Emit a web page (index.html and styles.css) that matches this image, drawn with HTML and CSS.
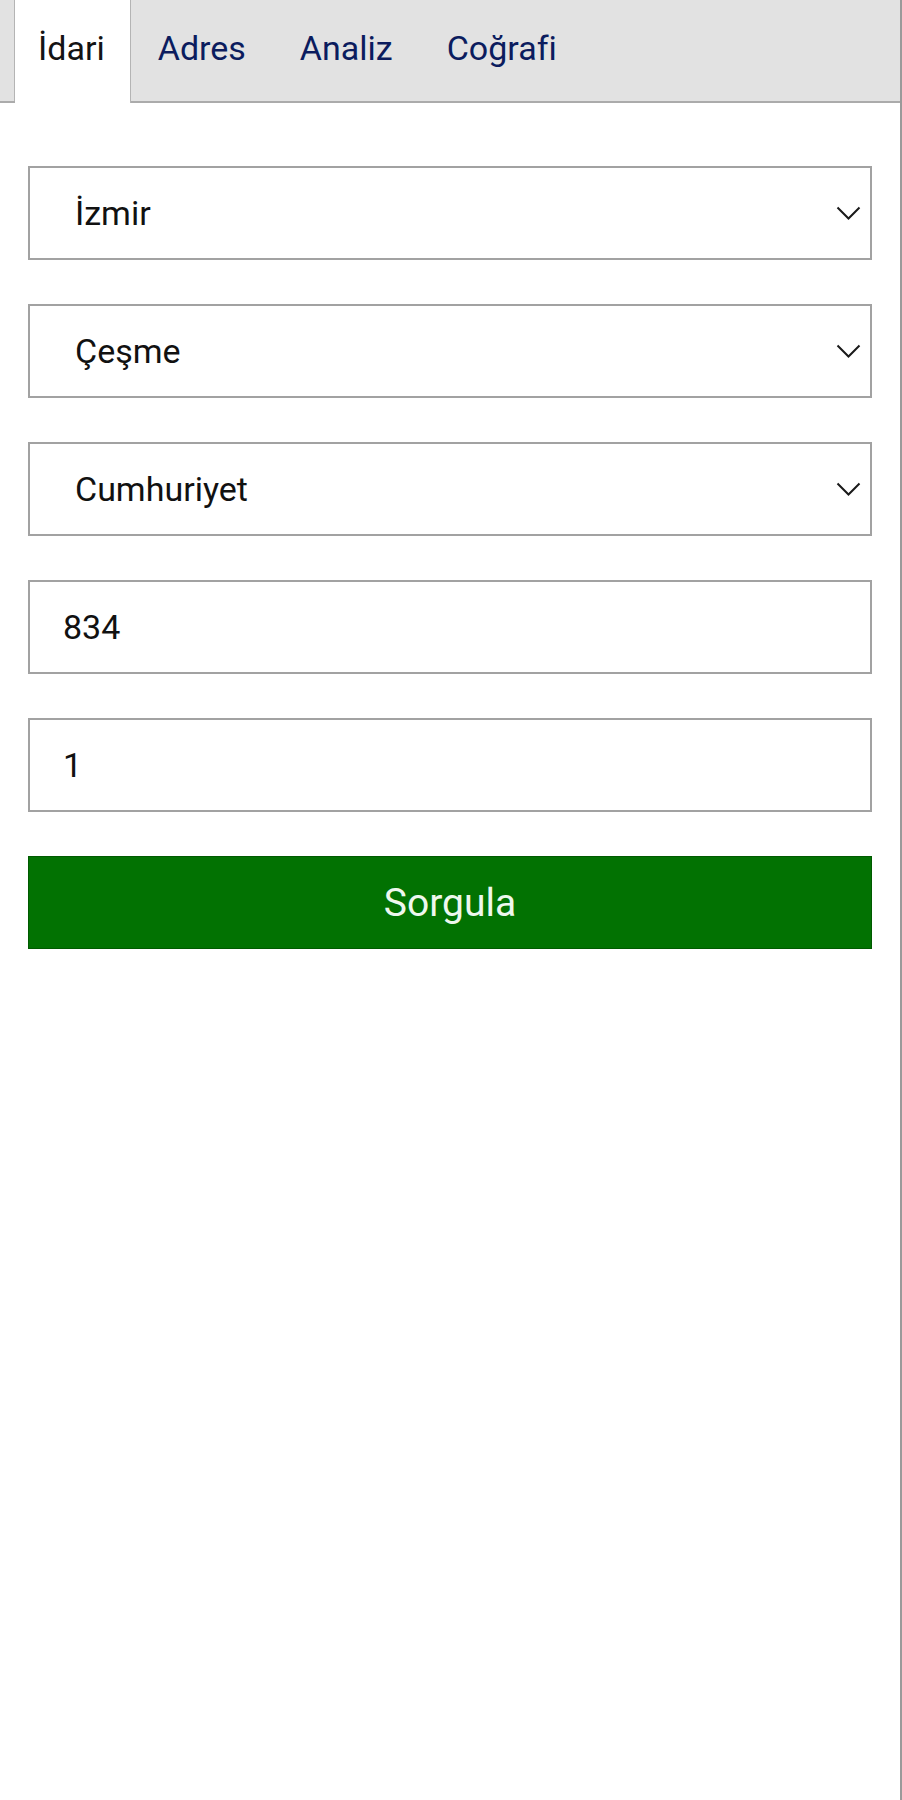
FILE: index.html
```html
<!DOCTYPE html>
<html lang="tr">
<head>
<meta charset="utf-8">
<title>Sorgu</title>
<link rel="stylesheet" href="styles.css">
</head>
<body>
<div class="panel">
  <nav class="tabs">
    <span class="tab-spacer"></span>
    <a class="tab active">İdari</a>
    <a class="tab">Adres</a>
    <a class="tab">Analiz</a>
    <a class="tab">Coğrafi</a>
  </nav>
  <form class="form">
    <div class="field select-field">
      <select class="select"><option>İzmir</option></select>
      <svg class="chev" width="25" height="15" viewBox="0 0 25 15"><path d="M1.5 1.5 L12.5 12.5 L23.5 1.5" fill="none" stroke="#1a1a1a" stroke-width="2"/></svg>
    </div>
    <div class="field select-field">
      <select class="select"><option>Çeşme</option></select>
      <svg class="chev" width="25" height="15" viewBox="0 0 25 15"><path d="M1.5 1.5 L12.5 12.5 L23.5 1.5" fill="none" stroke="#1a1a1a" stroke-width="2"/></svg>
    </div>
    <div class="field select-field">
      <select class="select"><option>Cumhuriyet</option></select>
      <svg class="chev" width="25" height="15" viewBox="0 0 25 15"><path d="M1.5 1.5 L12.5 12.5 L23.5 1.5" fill="none" stroke="#1a1a1a" stroke-width="2"/></svg>
    </div>
    <div class="field">
      <input class="input" type="text" value="834">
    </div>
    <div class="field">
      <input class="input" type="text" value="1">
    </div>
    <button class="submit" type="button">Sorgula</button>
  </form>
</div>
</body>
</html>
```

FILE: styles.css
```css
* { box-sizing: border-box; }

html, body {
  margin: 0;
  padding: 0;
  background: #ffffff;
}

body {
  font-family: Roboto, "Liberation Sans", Arial, sans-serif;
  color: #111111;
}

.panel {
  width: 902px;
  min-height: 1800px;
  border-right: 2px solid #9a9a9a;
}

.tabs {
  display: flex;
  height: 103px;
  background: #e2e2e2;
  border-bottom: 2px solid #ababab;
}

.tab-spacer {
  width: 15px;
  border-right: 1px solid #b4b4b4;
}

.tab {
  display: block;
  font-size: 34px;
  line-height: 1;
  padding: 31px 27px 0;
  color: #0b1c5e;
  text-decoration: none;
}

.tab.active {
  background: #ffffff;
  color: #141414;
  padding: 31px 25px 0 23px;
  border-right: 1px solid #b4b4b4;
  margin-bottom: -2px;
  height: 103px;
}

.form {
  display: flex;
  flex-direction: column;
  gap: 44px;
  padding: 63px 28px 0;
}

.field {
  display: flex;
  align-items: center;
  height: 94px;
  border: 2px solid #a2a2a2;
  background: #ffffff;
}

.select,
.input {
  flex: 1;
  height: 100%;
  border: none;
  outline: none;
  background: transparent;
  font-family: Roboto, "Liberation Sans", Arial, sans-serif;
  font-size: 34px;
  color: #111111;
  margin: 0;
}

.select {
  -webkit-appearance: none;
  appearance: none;
  padding: 0 0 0 45px;
}

.input {
  padding: 0 0 0 33px;
}

.chev {
  flex: none;
  margin-right: 9px;
}

.submit {
  height: 93px;
  margin: 0;
  border: 1px solid #005a00;
  background: #027202;
  color: #eef8ee;
  font-family: Roboto, "Liberation Sans", Arial, sans-serif;
  font-size: 39px;
  padding: 0;
}
```
